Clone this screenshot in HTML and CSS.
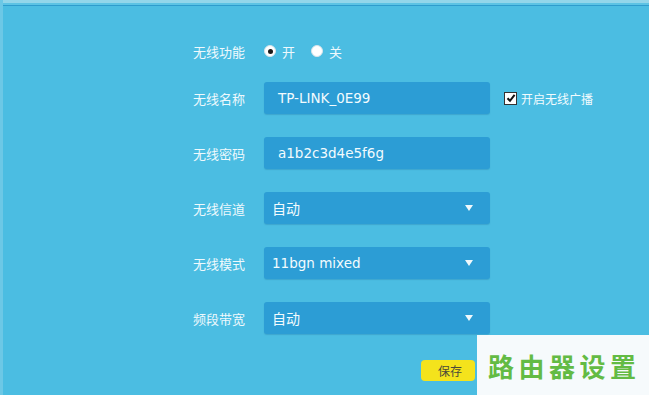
FILE: index.html
```html
<!DOCTYPE html>
<html lang="zh-CN">

<head>
  <meta charset="UTF-8">
  <meta name="viewport" content="width=device-width, initial-scale=1.0">
  <title>无线设置</title>
  <link rel="stylesheet" href="styles.css">
</head>

<body>
  <div class="panel">
    <div class="top-line"></div>

    <form class="wifi-form">
      <div class="row row-first">
        <span class="label">无线功能</span>
        <label class="radio checked"><span class="dot"></span>开</label>
        <label class="radio"><span class="dot"></span>关</label>
      </div>

      <div class="row">
        <span class="label">无线名称</span>
        <div class="field text">TP-LINK_0E99</div>
        <label class="check"><span class="box">
            <svg width="10" height="10" viewBox="0 0 10 10">
              <path d="M1.5 5.2 L4 7.8 L8.6 1.8" fill="none" stroke="#111" stroke-width="2" />
            </svg>
          </span>开启无线广播</label>
      </div>

      <div class="row">
        <span class="label">无线密码</span>
        <div class="field text">a1b2c3d4e5f6g</div>
      </div>

      <div class="row">
        <span class="label">无线信道</span>
        <div class="field select">自动<span class="arrow"></span></div>
      </div>

      <div class="row">
        <span class="label">无线模式</span>
        <div class="field select latin">11bgn mixed<span class="arrow"></span></div>
      </div>

      <div class="row">
        <span class="label">频段带宽</span>
        <div class="field select">自动<span class="arrow"></span></div>
      </div>

      <div class="actions">
        <button type="button" class="save">保存</button>
      </div>
    </form>

    <!-- watermark in the corner -->
    <div class="watermark"><span class="wm-text">路由器设置</span></div>
  </div>
</body>

</html>
```

FILE: styles.css
```css
body {
  margin: 0;
  font-family: "Noto Sans CJK SC", sans-serif;
  background-color: #4bbde2;
}

.panel {
  position: relative;
  width: 649px;
  height: 395px;
  overflow: hidden;
  background-color: #4bbde2;
  border-left: 3px solid #6cc8e6;
  box-sizing: border-box;
}

.top-line {
  height: 3px;
  background-color: #93d6ea;
  border-bottom: 2px solid #5cc3e4;
  box-shadow: 0 1px 0 #2e9ccd;
  margin-bottom: 1px;
}

.wifi-form {
  padding: 30px 0 0 190px;
}

.row {
  display: flex;
  align-items: center;
  height: 32px;
  margin-bottom: 23px;
  color: #eef9fd;
  font-size: 13px;
}

.row-first {
  height: 30px;
  margin-bottom: 16px;
}

.label {
  width: 71px;
  flex-shrink: 0;
}

.radio {
  display: flex;
  align-items: center;
  margin-right: 16px;
}

.radio .dot {
  width: 12px;
  height: 12px;
  border-radius: 50%;
  background-color: #fff;
  border: 1px solid #d8e4ea;
  margin-right: 6px;
  box-sizing: border-box;
  position: relative;
}

.radio.checked .dot::after {
  content: "";
  position: absolute;
  left: 2.5px;
  top: 2.5px;
  width: 5px;
  height: 5px;
  border-radius: 50%;
  background-color: #1a1a1a;
}

.field {
  width: 226px;
  height: 32px;
  box-sizing: border-box;
  background-color: #2c9dd5;
  border-radius: 3px;
  box-shadow: 0 1px 1px rgba(20, 100, 150, 0.25);
  display: flex;
  align-items: center;
  color: #f2fbfe;
  font-size: 14px;
  position: relative;
}

.field.text {
  padding-left: 14px;
  font-family: "DejaVu Sans", sans-serif;
  font-size: 13.5px;
}

.field.select {
  padding-left: 8px;
}

.field.latin {
  font-family: "DejaVu Sans", sans-serif;
  font-size: 13.5px;
}

.arrow {
  position: absolute;
  right: 17px;
  top: 13px;
  width: 0;
  height: 0;
  border-left: 4.5px solid transparent;
  border-right: 4.5px solid transparent;
  border-top: 6px solid #eef8fc;
}

.check {
  display: flex;
  align-items: center;
  margin-left: 14px;
  font-size: 12px;
  color: #f2fbfe;
}

.check .box {
  width: 11px;
  height: 11px;
  background-color: #fff;
  border: 1px solid #333;
  display: flex;
  align-items: center;
  justify-content: center;
  margin-right: 4px;
}

.actions {
  padding-left: 228px;
  margin-top: 12px;
}

.save {
  width: 54px;
  height: 21px;
  border: none;
  border-radius: 4px;
  background-color: #f4e31c;
  color: #4a4a3a;
  font-family: "Noto Sans CJK SC", sans-serif;
  font-size: 12px;
  padding: 0 0 0 4px;
}

.watermark {
  position: absolute;
  left: 474px;
  top: 335px;
  width: 172px;
  height: 60px;
  background-color: #f6fafc;
  display: flex;
  align-items: center;
  padding-left: 11px;
  box-sizing: border-box;
}

.wm-text {
  color: #63bb44;
  font-size: 26px;
  font-weight: 700;
  letter-spacing: 4.5px;
  white-space: nowrap;
  font-family: "Noto Sans CJK SC", sans-serif;
}
```
